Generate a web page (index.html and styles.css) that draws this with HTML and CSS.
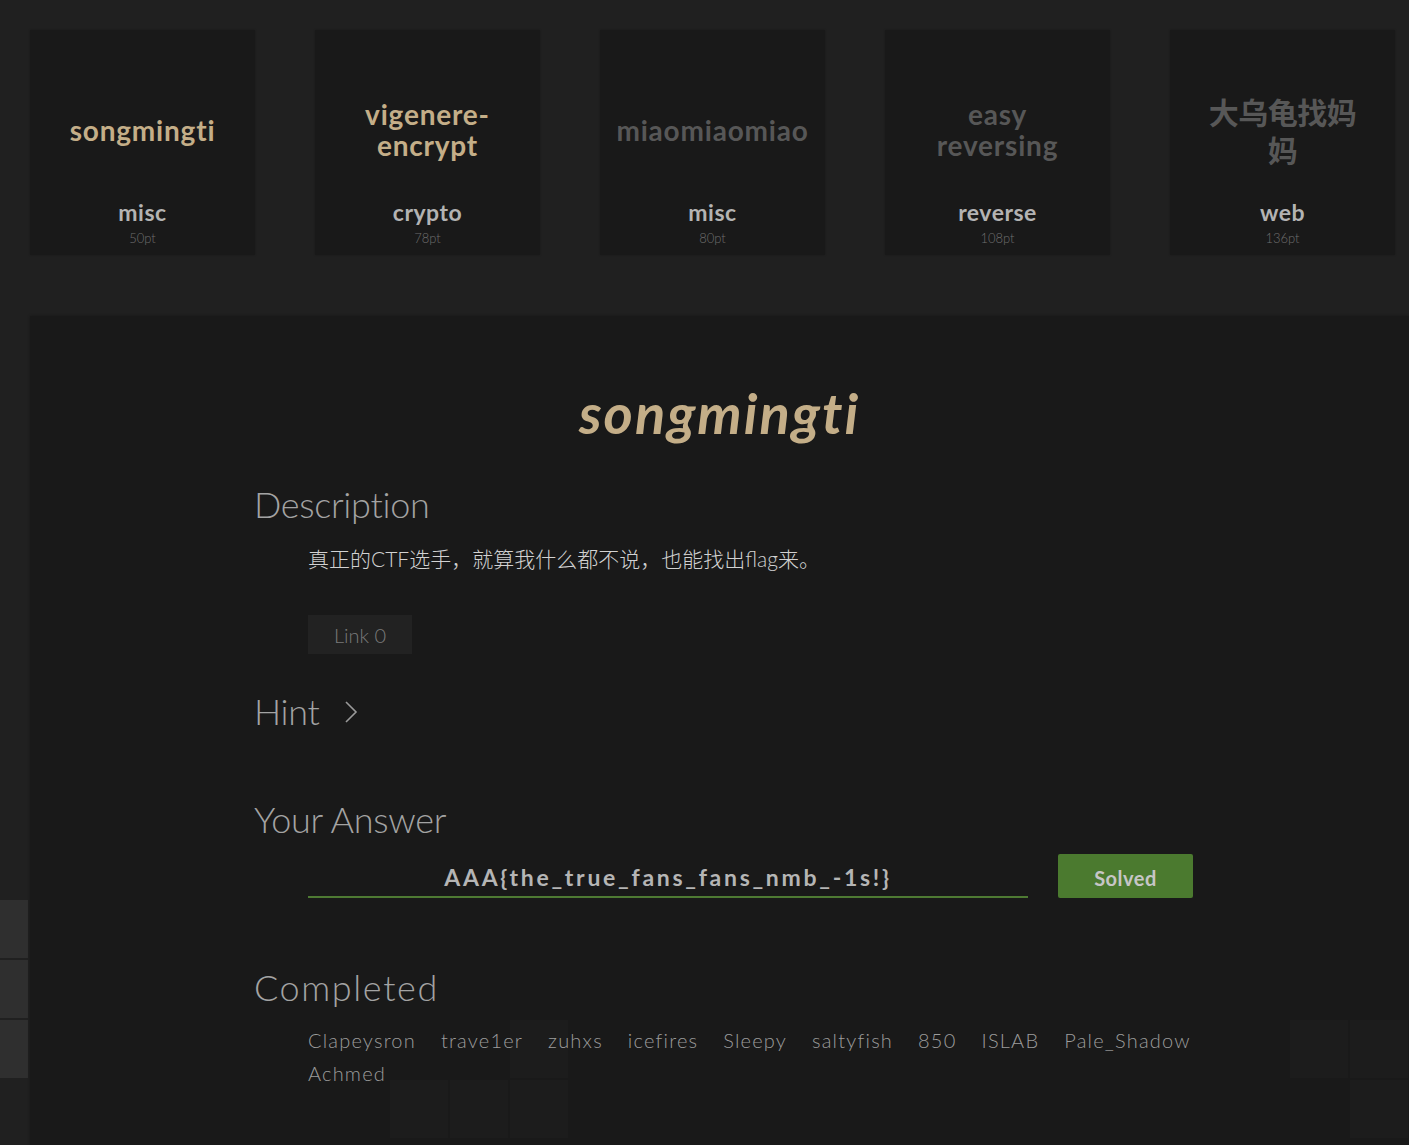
FILE: index.html
```html
<!DOCTYPE html>
<html lang="zh-CN">
<head>
<meta charset="utf-8">
<title>songmingti</title>
<link rel="stylesheet" href="styles.css">
</head>
<body>
<div class="tiles" aria-hidden="true">
  <span class="tile lit" style="left:-30px;top:900px"></span>
  <span class="tile lit" style="left:-30px;top:960px"></span>
  <span class="tile lit" style="left:-30px;top:1020px"></span>
  <span class="tile" style="left:390px;top:1080px"></span>
  <span class="tile" style="left:450px;top:1080px"></span>
  <span class="tile" style="left:510px;top:1020px"></span>
  <span class="tile" style="left:510px;top:1080px"></span>
  <span class="tile" style="left:1290px;top:1020px"></span>
  <span class="tile" style="left:1350px;top:1020px"></span>
  <span class="tile" style="left:1350px;top:1080px"></span>
</div>

<main class="page">
  <section class="cards">
    <div class="card solved">
      <div class="card-title">songmingti</div>
      <div class="card-cat">misc</div>
      <div class="card-pts">50pt</div>
    </div>
    <div class="card solved">
      <div class="card-title">vigenere-<br>encrypt</div>
      <div class="card-cat">crypto</div>
      <div class="card-pts">78pt</div>
    </div>
    <div class="card">
      <div class="card-title">miaomiaomiao</div>
      <div class="card-cat">misc</div>
      <div class="card-pts">80pt</div>
    </div>
    <div class="card">
      <div class="card-title">easy<br>reversing</div>
      <div class="card-cat">reverse</div>
      <div class="card-pts">108pt</div>
    </div>
    <div class="card">
      <div class="card-title cjk">大乌龟找妈<br>妈</div>
      <div class="card-cat">web</div>
      <div class="card-pts">136pt</div>
    </div>
  </section>

  <section class="panel">
    <h1 class="title">songmingti</h1>
    <div class="content">
      <h2 class="heading">Description</h2>
      <div class="indent">
        <p class="desc">真正的CTF选手，就算我什么都不说，也能找出flag来。</p>
        <button class="link-btn">Link 0</button>
      </div>

      <h2 class="heading hint">Hint
        <svg class="chev" width="14" height="24" viewBox="0 0 14 24"><polyline points="2,2 12,12 2,22" fill="none" stroke="#9a9a9a" stroke-width="1.6"/></svg>
      </h2>

      <h2 class="heading answer-h">Your Answer</h2>
      <div class="indent answer-row">
        <div class="answer-input">AAA{the_true_fans_fans_nmb_-1s!}</div>
        <button class="solved-btn">Solved</button>
      </div>

      <h2 class="heading completed-h">Completed</h2>
      <div class="indent names">
        <span>Clapeysron</span><span>trave1er</span><span>zuhxs</span><span>icefires</span><span>Sleepy</span><span>saltyfish</span><span>850</span><span>ISLAB</span><span>Pale_Shadow</span><span>Achmed</span>
      </div>
    </div>
  </section>
</main>
</body>
</html>
```

FILE: styles.css
```css
html, body {
  margin: 0;
  padding: 0;
}
body {
  background: #202020;
  width: 1409px;
  height: 1145px;
  overflow: hidden;
  position: relative;
  font-family: "Lato", "Noto Sans CJK SC", sans-serif;
  color: #a0a0a0;
}

.tiles {
  position: absolute;
  inset: 0;
  z-index: 0;
}
.tile {
  position: absolute;
  width: 58px;
  height: 58px;
  background: #2f2f2f;
}

.page {
  position: relative;
  z-index: 1;
}

.cards {
  display: flex;
  gap: 60px;
  padding: 30px 0 0 30px;
}
.card {
  flex: 0 0 225px;
  width: 225px;
  height: 225px;
  background: rgba(24, 24, 24, 0.8);
  box-shadow: 0 0 2px rgba(0,0,0,0.25);
  display: flex;
  flex-direction: column;
  align-items: center;
  box-sizing: border-box;
  padding-top: 30px;
  text-align: center;
}
.card-title {
  height: 140px;
  display: flex;
  align-items: center;
  justify-content: center;
  font-weight: 700;
  font-size: 28px;
  line-height: 31px;
  color: #575757;
  letter-spacing: 0.8px;
}
.card-title.cjk {
  font-family: "Noto Sans CJK SC", sans-serif;
  font-size: 30px;
  line-height: 38px;
  letter-spacing: -0.5px;
}
.card.solved .card-title {
  color: #c4ae88;
}
.card-cat {
  font-weight: 700;
  font-size: 23px;
  line-height: 24px;
  color: #b3b3b3;
  letter-spacing: 0.5px;
}
.card-pts {
  margin-top: 2px;
  font-size: 13px;
  line-height: 24px;
  font-weight: 300;
  color: #6e6e6e;
}

.panel {
  margin: 61px 0 0 30px;
  height: 829px;
  background: rgba(24, 24, 24, 0.8);
  box-shadow: 0 0 3px rgba(0,0,0,0.3);
  padding-top: 65px;
  box-sizing: border-box;
}
.title {
  margin: 0;
  text-align: center;
  font-size: 56px;
  line-height: 64px;
  font-weight: 700;
  font-style: italic;
  color: #c4ae88;
  letter-spacing: 2px;
}
.content {
  padding-left: 224px;
  width: 939px;
}
.heading {
  margin: 0;
  font-weight: 300;
  font-size: 36px;
  line-height: 44px;
  color: #a3a3a3;
  letter-spacing: -0.3px;
}
.heading:first-child {
  margin-top: 37px;
}
.indent {
  padding-left: 54px;
}
.desc {
  margin: 18px 0 0 0;
  font-size: 21px;
  line-height: 30px;
  color: #d2d2d2;
  font-family: "Lato", "Noto Sans CJK SC", sans-serif;
  font-weight: 300;
}
.link-btn {
  margin-top: 41px;
  height: 39px;
  width: 104px;
  border: none;
  background: #222222;
  color: #7a7a7a;
  font-family: "Lato", sans-serif;
  font-weight: 300;
  font-size: 20px;
  padding: 0;
  display: block;
}
.hint {
  margin-top: 35px;
  display: flex;
  align-items: center;
  gap: 24px;
}
.chev {
  display: block;
  margin-top: 1px;
}
.answer-h {
  margin-top: 64px;
}
.answer-row {
  margin-top: 13px;
  display: flex;
  align-items: center;
  gap: 30px;
}
.answer-input {
  width: 720px;
  height: 44px;
  box-sizing: border-box;
  border-bottom: 2px solid #4e7a33;
  text-align: center;
  font-weight: 700;
  font-size: 23px;
  line-height: 46px;
  letter-spacing: 2.7px;
  color: #b5b5b5;
}
.solved-btn {
  width: 135px;
  height: 44px;
  border: none;
  border-radius: 2px;
  background: #4b7a2f;
  color: #c6c6c6;
  font-family: "Lato", sans-serif;
  font-weight: 700;
  font-size: 20px;
  letter-spacing: 0.5px;
  padding: 3px 0 0 0;
}
.completed-h {
  margin-top: 67px;
  letter-spacing: 1.6px;
}
.names {
  margin-top: 15px;
  width: 885px;
  display: flex;
  flex-wrap: wrap;
  column-gap: 25px;
  font-size: 20px;
  line-height: 33px;
  font-weight: 300;
  color: #9c9c9c;
  letter-spacing: 1.2px;
}
```
